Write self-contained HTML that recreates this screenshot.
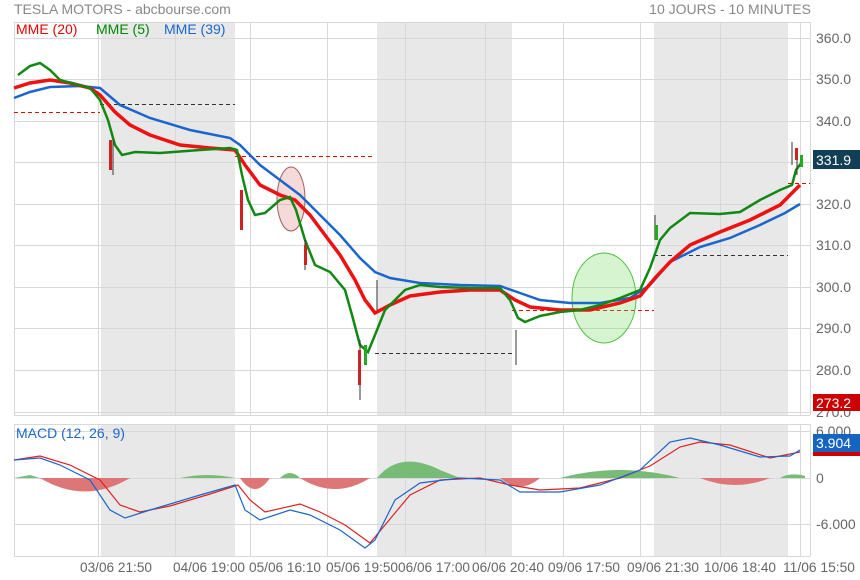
<!DOCTYPE html>
<html><head><meta charset="utf-8"><style>
body{margin:0;background:#fff;width:860px;height:580px;overflow:hidden;font-family:"Liberation Sans",sans-serif}
svg{position:absolute;left:0;top:0}
</style></head><body>
<svg width="860" height="580" viewBox="0 0 860 580" font-family="Liberation Sans, sans-serif">
<text x="14" y="14" font-size="14" fill="#888">TESLA MOTORS - abcbourse.com</text>
<text x="811" y="14" font-size="14" fill="#888" text-anchor="end">10 JOURS - 10 MINUTES</text>
<g fill="#e8e8e8">
<rect x="101" y="22" width="134" height="393"/><rect x="377" y="22" width="135" height="393"/><rect x="654" y="22" width="134" height="393"/>
<rect x="101" y="424" width="134" height="132"/><rect x="377" y="424" width="135" height="132"/><rect x="654" y="424" width="134" height="132"/>
</g>
<g stroke="#d8d8d8" stroke-width="1">
<path d="M14.5 22V415M98.5 22V415M175.5 22V415M250.5 22V415M327.5 22V415M405.5 22V415M485.5 22V415M563.5 22V415M640.5 22V415M720.5 22V415M800.5 22V415M810.5 22V415"/>
<path d="M14.5 424V556M98.5 424V556M175.5 424V556M250.5 424V556M327.5 424V556M405.5 424V556M485.5 424V556M563.5 424V556M640.5 424V556M720.5 424V556M800.5 424V556M810.5 424V556"/>
<path d="M14 22.5H810M14 38.5H810M14 79.5H810M14 121.5H810M14 162.5H810M14 204.5H810M14 245.5H810M14 287.5H810M14 328.5H810M14 370.5H810M14 412.5H810M14 415.5H810"/>
<path d="M14 424.5H810M14 431.5H810M14 478.5H810M14 524.5H810M14 556.5H810"/>
</g>
<g stroke-width="1" stroke-dasharray="4,3" fill="none">
<path d="M14 112.5H100" stroke="#e00"/><path d="M100 104.5H235" stroke="#333"/>
<path d="M235 156.5H375" stroke="#e00"/><path d="M375 353.5H512" stroke="#333"/>
<path d="M512 310.5H654" stroke="#e00"/><path d="M654 255.5H788" stroke="#333"/>
<path d="M788 183.5H810" stroke="#e00"/>
</g>
<ellipse cx="291" cy="199" rx="14" ry="32" fill="rgba(230,150,150,0.35)" stroke="#a06060"/>
<ellipse cx="604" cy="298" rx="32" ry="45" fill="rgba(120,220,100,0.3)" stroke="#50c040"/>
<polyline fill="none" stroke="#1a66cc" stroke-width="2.5" points="14,98 30,92 50,87 80,86 100,88 120,105 150,118 190,130 230,138 240,145 260,165 280,180 300,195 320,215 340,235 360,258 375,272 390,278 420,283 460,285 500,286 520,293 540,300 570,303 600,303 630,298 650,285 670,262 700,247 730,238 760,225 785,213 800,204"/>
<polyline fill="none" stroke="#ee1111" stroke-width="3.5" points="14,88 30,83 50,80 70,83 90,88 100,95 115,112 130,125 150,135 180,145 210,148 235,150 245,165 260,185 280,195 295,200 310,215 325,235 340,255 355,280 365,300 375,313 390,305 410,296 440,292 470,290 500,290 515,300 530,307 560,310 590,310 620,303 640,296 655,278 670,262 690,245 720,232 750,220 780,205 800,185"/>
<polyline fill="none" stroke="#118811" stroke-width="2.5" points="18,75 30,66 40,63 50,70 60,80 75,84 90,88 100,100 108,120 115,145 122,155 135,152 160,153 200,150 230,148 237,150 242,175 248,200 255,215 265,213 280,200 290,197 296,210 305,240 315,265 330,272 345,290 352,315 360,345 368,352 375,335 385,310 395,300 405,290 420,285 440,287 470,288 500,288 510,300 518,318 525,322 540,316 560,312 580,310 600,305 620,298 640,290 650,268 660,240 670,228 690,213 720,214 740,212 760,200 780,190 792,185 796,170 802,162"/>
<g stroke="#333" stroke-width="1"><path d="M113 140V175M305 240V270M360 340V400M377 280V310M516 330V365M655 215V240M792 142V165M797 150V175"/></g>
<g fill="#c22"><rect x="109" y="140" width="3" height="30"/><rect x="240" y="190" width="3" height="40"/><rect x="358" y="350" width="3" height="35"/><rect x="795" y="148" width="3" height="12"/><rect x="304" y="245" width="3" height="20"/></g>
<g fill="#2a2"><rect x="364" y="345" width="3" height="20"/><rect x="800" y="155" width="3" height="12"/><rect x="655" y="225" width="3" height="15"/></g>
<text x="16" y="34" font-size="14" fill="#e00">MME (20)</text>
<text x="96" y="34" font-size="14" fill="#080">MME (5)</text>
<text x="164" y="34" font-size="14" fill="#1a66cc">MME (39)</text>
<g font-size="14" fill="#666">
<text x="816" y="43">360.0</text><text x="816" y="84">350.0</text><text x="816" y="126">340.0</text>
<text x="816" y="209">320.0</text><text x="816" y="250">310.0</text><text x="816" y="292">300.0</text>
<text x="816" y="333">290.0</text><text x="816" y="375">280.0</text><text x="816" y="417">270.0</text>
<text x="816" y="436">6.000</text><text x="816" y="483">0</text><text x="816" y="529">-6.000</text>
</g>
<rect x="813" y="150" width="47" height="19" fill="#123f55"/><text x="816" y="165" font-size="14" fill="#fff">331.9</text>
<rect x="813" y="394" width="47" height="17" fill="#c00"/><text x="816" y="408" font-size="14" fill="#fff">273.2</text>
<rect x="813" y="434" width="47" height="18" fill="#1565c0"/><rect x="813" y="452" width="47" height="4" fill="#c00"/><text x="816" y="448" font-size="14" fill="#fff">3.904</text>
<path d="M40 478 Q85 505 130 478Z M240 478 Q255 500 270 478Z M300 478 Q335 500 370 478Z M500 478 Q520 495 540 478Z M700 478 Q735 492 770 478Z" fill="#dd7777"/>
<path d="M14 478 L40 478 L30 475Z M180 478 Q207 472 235 478Z M280 478 Q290 468 300 478Z M377 478 Q400 450 440 470 L460 478Z M560 478 Q620 462 680 478Z M780 478 Q790 472 805 476 L805 478Z" fill="#77bb77"/>
<polyline fill="none" stroke="#dd2222" stroke-width="1.2" points="14,460 40,456 70,465 100,480 120,505 140,512 170,506 210,494 238,485 250,500 265,512 300,504 320,512 345,525 370,543 385,525 410,495 440,480 480,478 510,485 540,490 580,488 620,478 650,466 680,447 700,442 730,445 770,458 800,452"/>
<polyline fill="none" stroke="#1a66cc" stroke-width="1.2" points="14,460 40,458 60,465 90,480 110,510 125,518 150,510 200,495 235,485 245,510 260,520 290,510 310,515 340,530 365,548 375,540 395,500 420,483 460,478 500,480 520,492 560,492 600,485 640,470 670,442 690,438 720,445 760,457 790,456 800,450"/>
<text x="16" y="438" font-size="14" fill="#1a66cc">MACD (12, 26, 9)</text>
<g font-size="14" fill="#666" lengthAdjust="spacingAndGlyphs">
<text x="80" y="572" textLength="72" lengthAdjust="spacingAndGlyphs">03/06 21:50</text>
<text x="173" y="572" textLength="72" lengthAdjust="spacingAndGlyphs">04/06 19:00</text>
<text x="249" y="572" textLength="72" lengthAdjust="spacingAndGlyphs">05/06 16:10</text>
<text x="326" y="572" textLength="72" lengthAdjust="spacingAndGlyphs">05/06 19:50</text>
<text x="398" y="572" textLength="72" lengthAdjust="spacingAndGlyphs">06/06 17:00</text>
<text x="472" y="572" textLength="72" lengthAdjust="spacingAndGlyphs">06/06 20:40</text>
<text x="548" y="572" textLength="72" lengthAdjust="spacingAndGlyphs">09/06 17:50</text>
<text x="627" y="572" textLength="72" lengthAdjust="spacingAndGlyphs">09/06 21:30</text>
<text x="704" y="572" textLength="72" lengthAdjust="spacingAndGlyphs">10/06 18:40</text>
<text x="783" y="572" textLength="72" lengthAdjust="spacingAndGlyphs">11/06 15:50</text>
</g>
</svg>
</body></html>
